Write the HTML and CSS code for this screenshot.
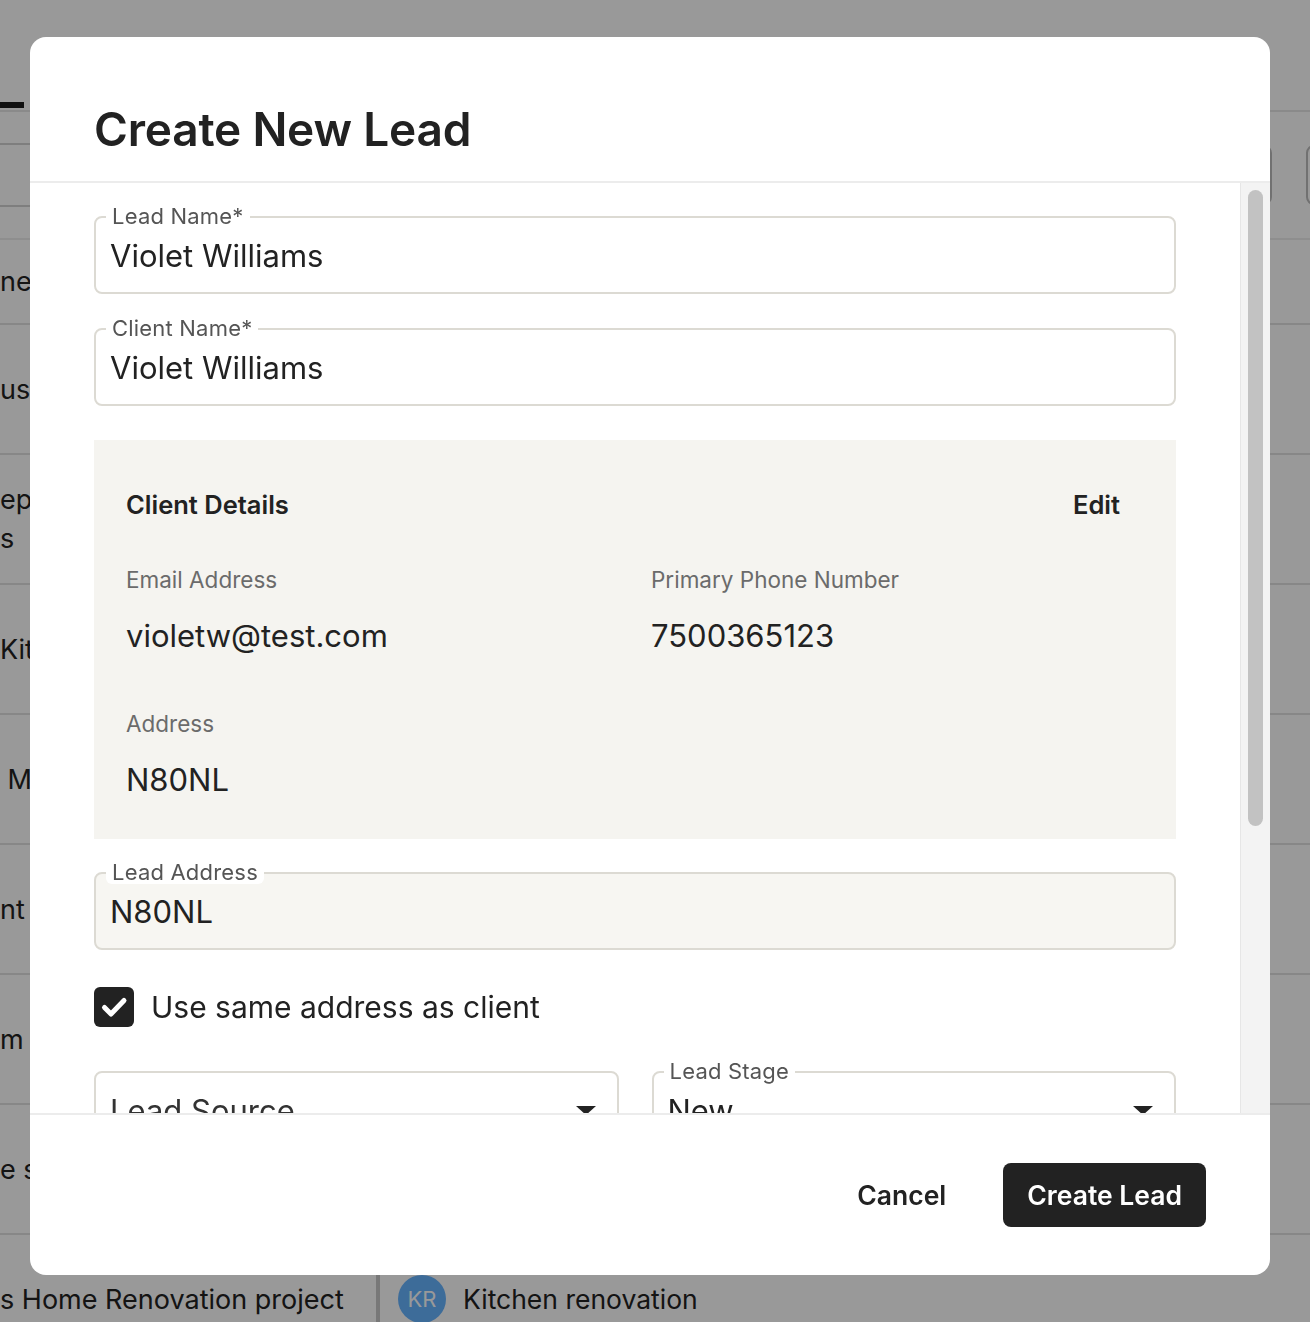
FILE: index.html
```html
<!DOCTYPE html>
<html>
<head>
	<title>Leads</title>
	<link rel="stylesheet" href="styles.css">
</head>
<body>
<div class="page">
	<div class="tabs">
		<div class="tab-active"></div>
	</div>
	<div class="toolbar">
		<div class="search"></div>
		<div class="tool-btns">
			<div class="tool-btn"></div>
			<div class="tool-btn"></div>
		</div>
	</div>
	<div class="thead">
		<div class="cell-main">ne</div>
	</div>
	<div class="row"><div class="cell-main">use</div><div class="cell"></div></div>
	<div class="row"><div class="cell-main">epo<br>s</div><div class="cell"></div></div>
	<div class="row"><div class="cell-main">Kitc</div><div class="cell"></div></div>
	<div class="row"><div class="cell-main"> M</div><div class="cell"></div></div>
	<div class="row"><div class="cell-main">nt a</div><div class="cell"></div></div>
	<div class="row"><div class="cell-main">m</div><div class="cell"></div></div>
	<div class="row"><div class="cell-main">e se</div><div class="cell"></div></div>
	<div class="row">
		<div class="cell-main">s Home Renovation project</div>
		<div class="cell">
			<span class="avatar">KR</span>
			<span>Kitchen renovation</span>
		</div>
	</div>
</div>

<div class="overlay"></div>

<div class="modal">
	<div class="modal-head">
		<h1>Create New Lead</h1>
	</div>

	<div class="modal-body">
		<div class="form">
			<div class="field">
				<span class="field-label">Lead Name*</span>
				<span>Violet Williams</span>
			</div>
			<div class="field">
				<span class="field-label">Client Name*</span>
				<span>Violet Williams</span>
			</div>

			<div class="client-box">
				<div class="client-head">
					<span>Client Details</span>
					<button class="edit-btn">Edit</button>
				</div>
				<div class="client-grid">
					<div>
						<div class="info-label">Email Address</div>
						<div class="info-value">violetw@test.com</div>
					</div>
					<div>
						<div class="info-label">Primary Phone Number</div>
						<div class="info-value">7500365123</div>
					</div>
					<div>
						<div class="info-label">Address</div>
						<div class="info-value">N80NL</div>
					</div>
				</div>
			</div>

			<div class="field field-filled">
				<span class="field-label">Lead Address</span>
				<span>N80NL</span>
			</div>

			<label class="check-row">
				<span class="checkbox">
					<svg width="40" height="40" viewBox="0 0 40 40"><path d="M10.5 20.5l6.5 6.5L30 13.5" fill="none" stroke="#fff" stroke-width="5" stroke-linecap="round" stroke-linejoin="round"/></svg>
				</span>
				<span>Use same address as client</span>
			</label>

			<div class="select-row">
				<div class="field select">
					<span class="placeholder">Lead Source</span>
					<span class="arrow"></span>
				</div>
				<div class="field select">
					<span class="field-label">Lead Stage</span>
					<span>New</span>
					<span class="arrow"></span>
				</div>
			</div>
		</div>
		<div class="scroll-track">
			<div class="scroll-thumb"></div>
		</div>
	</div>

	<div class="modal-foot">
		<button class="btn-text">Cancel</button>
		<button class="btn-primary">Create Lead</button>
	</div>
</div>
</body>
</html>
```

FILE: styles.css
```css
*{
	box-sizing: border-box;
}
body{
	margin: 0;
	font-family: Inter, "Liberation Sans", sans-serif;
	color: #222;
	overflow: hidden;
}

/* page behind the dialog */
.page{
	width: 1310px;
	height: 1322px;
	background: #fff;
	overflow: hidden;
	font-size: 27px;
}
.tabs{
	height: 112px;
	border-bottom: 2px solid #e6e6e6;
	display: flex;
	align-items: flex-end;
	padding-bottom: 2px;
}
.tab-active{
	width: 24px;
	height: 6px;
	background: #1c1c1c;
}
.toolbar{
	height: 128px;
	display: flex;
	justify-content: space-between;
	align-items: center;
	border-bottom: 2px solid #ededed;
}
.search{
	width: 300px;
	height: 64px;
	margin-left: -200px;
	border: 2px solid #d3d3d3;
	border-radius: 8px;
}
.tool-btns{
	display: flex;
	gap: 34px;
	margin-right: -92px;
}
.tool-btn{
	width: 96px;
	height: 60px;
	border: 2px solid #bcbcbc;
	border-radius: 8px;
}
.thead{
	height: 85px;
	display: flex;
	align-items: center;
	border-bottom: 2px solid #e2e2e2;
}
.row{
	height: 130px;
	display: flex;
	border-bottom: 2px solid #e2e2e2;
}
.cell-main{
	width: 380px;
	flex: none;
	display: flex;
	align-items: center;
	white-space: pre;
	line-height: 39px;
	border-right: 4px solid #c9c9c9;
	overflow: hidden;
}
.thead .cell-main{
	border-right: none;
}
.cell{
	display: flex;
	align-items: center;
	gap: 17px;
	padding-left: 18px;
	font-size: 26.5px;
}
.avatar{
	width: 48px;
	height: 48px;
	border-radius: 50%;
	background: #66b4ff;
	color: #fff;
	font-size: 22px;
	display: flex;
	align-items: center;
	justify-content: center;
}
.overlay{
	position: fixed;
	inset: 0;
	background: rgba(0,0,0,0.4);
}

/* dialog */
.modal{
	position: fixed;
	top: 37px;
	left: 30px;
	width: 1240px;
	height: 1238px;
	background: #fff;
	border-radius: 16px;
	overflow: hidden;
	display: flex;
	flex-direction: column;
}
.modal-head{
	padding: 64px 64px 24px 64px;
	border-bottom: 2px solid #ececec;
}
.modal-head h1{
	margin: 0;
	font-size: 46px;
	line-height: 56px;
	font-weight: 600;
	letter-spacing: -0.2px;
}
.modal-body{
	flex: 1;
	display: flex;
	min-height: 0;
}
.form{
	flex: 1;
	overflow: hidden;
	padding: 33px 64px 0 64px;
}
.scroll-track{
	width: 30px;
	flex: none;
	background: #f3f3f3;
	border-left: 1px solid #e6e6e6;
	padding: 7px 7px 0 7px;
}
.scroll-thumb{
	height: 636px;
	border-radius: 8px;
	background: #c2c2c2;
}

.field{
	position: relative;
	height: 78px;
	border: 2px solid #dcdad3;
	border-radius: 8px;
	display: flex;
	align-items: center;
	padding: 0 14px;
	font-size: 31px;
	margin-bottom: 34px;
}
.field-label{
	position: absolute;
	left: 10px;
	top: -14px;
	padding: 0 6px;
	background: #fff;
	border-radius: 6px;
	font-size: 22px;
	line-height: 24px;
	color: #555;
	letter-spacing: 0.2px;
}
.field-filled{
	background: #f7f6f2;
	margin-top: 33px;
	margin-bottom: 0;
}

.client-box{
	background: #f5f4f0;
	padding: 40px 32px 39px 32px;
}
.client-head{
	display: flex;
	justify-content: space-between;
	align-items: center;
	height: 48px;
	font-size: 25.5px;
	font-weight: 600;
}
.edit-btn{
	font: inherit;
	color: #222;
	background: none;
	border: none;
	padding: 0 24px;
	height: 48px;
}
.client-grid{
	display: grid;
	grid-template-columns: 525px 1fr;
	row-gap: 54px;
	margin-top: 38px;
}
.info-label{
	font-size: 22.5px;
	line-height: 28px;
	color: #6b6b6b;
}
.info-value{
	font-size: 31px;
	line-height: 40px;
	margin-top: 22px;
}

.check-row{
	display: flex;
	align-items: center;
	gap: 17px;
	margin-top: 37px;
	font-size: 30px;
}
.checkbox{
	width: 40px;
	height: 40px;
	border-radius: 6px;
	background: #222;
	display: flex;
	align-items: center;
	justify-content: center;
}

.select-row{
	display: grid;
	grid-template-columns: 1fr 1fr;
	gap: 33px;
	margin-top: 44px;
}
.select{
	justify-content: space-between;
	padding-right: 21px;
}
.placeholder{
	color: #333;
}
.arrow{
	width: 0;
	height: 0;
	border-left: 10px solid transparent;
	border-right: 10px solid transparent;
	border-top: 9px solid #222;
}

.modal-foot{
	height: 162px;
	flex: none;
	border-top: 2px solid #ececec;
	display: flex;
	justify-content: flex-end;
	align-items: center;
	gap: 33px;
	padding-right: 64px;
}
.btn-text, .btn-primary{
	font-family: inherit;
	font-size: 26.5px;
	font-weight: 600;
	height: 64px;
	padding: 0 24px;
	border: none;
	border-radius: 8px;
	color: #222;
	background: none;
}
.btn-primary{
	background: #222;
	color: #fff;
	padding: 0 24px;
}
```
